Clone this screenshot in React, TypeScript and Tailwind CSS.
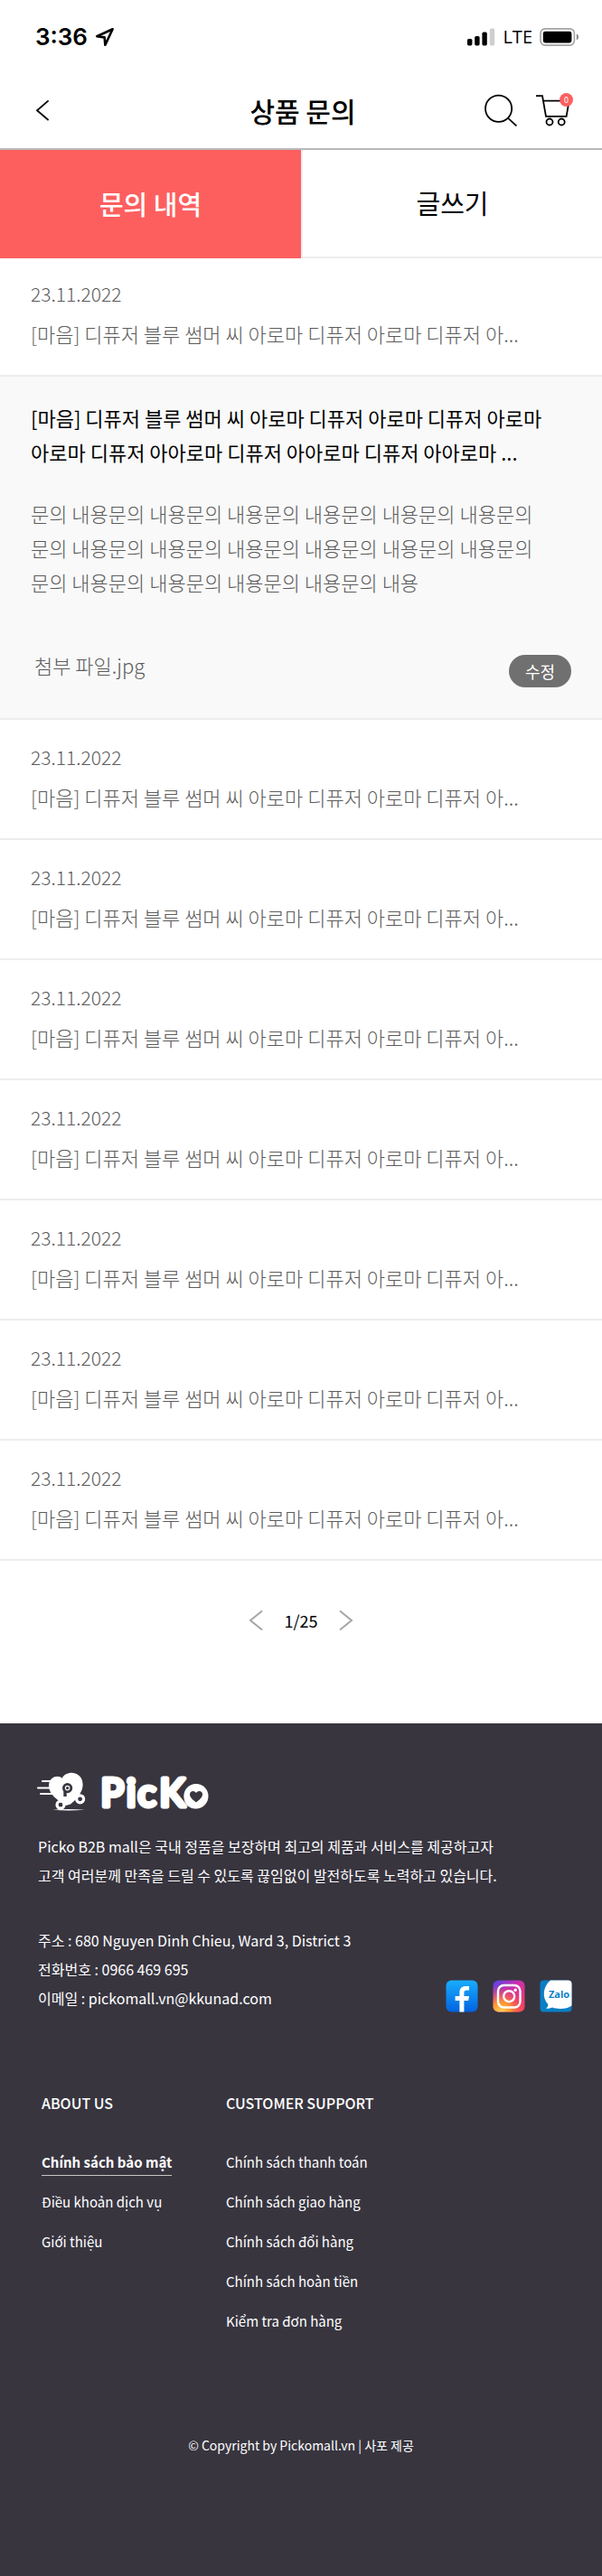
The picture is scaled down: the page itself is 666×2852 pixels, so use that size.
import React from "react";

const ROW_TITLE = "[마음] 디퓨저 블루 썸머 씨 아로마 디퓨저 아로마 디퓨저 아...";
const rows = [1, 2, 3, 4, 5, 6, 7];

const supportLinks = [
  "Chính sách thanh toán",
  "Chính sách giao hàng",
  "Chính sách đổi hàng",
  "Chính sách hoàn tiền",
  "Kiểm tra đơn hàng",
];

function StatusBar() {
  return (
    <div className="flex h-[82px] items-center justify-between pr-[25px] pl-[39px] font-['Inter',sans-serif]">
      <div className="flex items-center gap-2">
        <span className="text-[26px] leading-8 font-semibold">3:36</span>
        <svg width="22" height="22" viewBox="0 0 22 22" fill="none" stroke="#000" strokeWidth="2.6" strokeLinejoin="round" aria-hidden="true">
          <path d="M19.6 2.2 2.2 10.2 10.6 11.4 11.4 19.8Z" />
        </svg>
      </div>
      <div className="flex items-center gap-2">
        <svg width="31" height="20" viewBox="0 0 31 20" aria-hidden="true">
          <rect x="0" y="12" width="5.4" height="7.4" rx="1.6" />
          <rect x="8.2" y="9" width="5.4" height="10.4" rx="1.6" />
          <rect x="16.4" y="4.6" width="5.4" height="14.8" rx="1.6" />
          <rect x="24.8" y="0.6" width="5.4" height="18.8" rx="1.6" fill="#cfcfcf" />
        </svg>
        <span className="font-['Open_Sans',sans-serif] text-[20px] leading-6 font-medium">LTE</span>
        <svg width="44" height="20" viewBox="0 0 44 20" aria-hidden="true">
          <rect x="1" y="0.9" width="37.4" height="18.2" rx="5" fill="none" stroke="#a3a3a3" strokeWidth="1.6" />
          <rect x="3.8" y="3.8" width="31.6" height="12.6" rx="2.4" />
          <path d="M40.8 6.6c3 1 3 5.8 0 6.8Z" fill="#8a8a8a" />
        </svg>
      </div>
    </div>
  );
}

function Header() {
  return (
    <header className="grid h-[84px] grid-cols-[1fr_auto_1fr] items-center border-b-2 border-[#b9b9b9] pr-8 pb-0.5 pl-9">
      <button type="button" aria-label="뒤로" className="w-6">
        <svg width="22" height="26" viewBox="0 0 22 26" fill="none" stroke="#000" strokeWidth="1.8" aria-hidden="true">
          <path d="M17.6 2.4 5 13.2 17.6 24" />
        </svg>
      </button>
      <h1 className="text-[30px] leading-9 font-medium">상품 문의</h1>
      <div className="flex items-center justify-end gap-5">
        <button type="button" aria-label="검색">
          <svg width="36" height="36" viewBox="0 0 36 36" fill="none" stroke="#000" strokeWidth="1.8" aria-hidden="true">
            <circle cx="15.6" cy="16.2" r="14.6" />
            <path d="M25.6 26.4 35.4 35.4" />
          </svg>
        </button>
        <button type="button" aria-label="장바구니" className="relative">
          <svg width="42" height="36" viewBox="0 0 42 36" fill="none" stroke="#000" strokeWidth="1.8" aria-hidden="true">
            <path d="M1 2.2H8L12 24.8H34.6L37.6 7.6H8.8" />
            <circle cx="16" cy="31" r="3.5" />
            <circle cx="29.2" cy="31" r="3.5" />
          </svg>
          <span className="absolute -top-px right-0 flex size-[15px] items-center justify-center rounded-full bg-[#fd5f5f] text-[9px] leading-none text-white">0</span>
        </button>
      </div>
    </header>
  );
}

function InquiryRow({ first = false }: { first?: boolean }) {
  return (
    <li className={`${first ? "pt-5" : "pt-[22px]"} border-b-2 border-[#ededed] px-[34px] pb-[27px] leading-[38px] font-light text-[#5c5c5c]`}>
      <time className="block text-[21px]">23.11.2022</time>
      <p className="mt-1.5 truncate text-[22px]">{ROW_TITLE}</p>
    </li>
  );
}

function Logo() {
  return (
    <svg width="192" height="52" viewBox="0 -4 192 52" role="img" aria-label="PicKo">
      <g stroke="#fff" strokeWidth="2" strokeLinecap="round">
        <path d="M6 10H16M1 17.5H15M4 24H17" />
      </g>
      <path d="M32 37C22 31 13 24 13 15.5 13 8 18 4.8 22.5 4.8 25 4.8 26.5 5.6 27.6 6.8 29.4 2.8 34 .6 39 .8 46 1.2 50.6 6.5 50.6 14 50.6 22 44 30 37 35.5Z" fill="#fff" />
      <circle cx="26" cy="36.2" r="4" fill="#38353f" stroke="#fff" strokeWidth="3.2" />
      <circle cx="47.6" cy="29.8" r="4" fill="#38353f" stroke="#fff" strokeWidth="3.2" />
      <path d="M17 41.8Q34 40.4 53 41.8 34 43.2 17 41.8Z" fill="#fff" />
      <path d="M31 27V17" stroke="#38353f" strokeWidth="3.4" fill="none" />
      <circle cx="33.6" cy="17.6" r="4.2" fill="#fff" stroke="#38353f" strokeWidth="2.8" />
      <circle cx="33.6" cy="17.6" r="1.6" fill="#38353f" />
      <text x="70.5 99 111.5 135.5 163.5" y="37.5" fill="#fff" stroke="#fff" strokeWidth="5" strokeLinejoin="round" strokeLinecap="round" className="font-['Lato',sans-serif] text-[42px] font-medium">PicKo</text>
      <circle cx="176" cy="26.5" r="13.5" fill="#fff" />
      <path d="M176 33.5C172 30.5 169 28 169 24.6 169 20.4 174 19.6 176 23 178 19.6 183 20.4 183 24.6 183 28 180 30.5 176 33.5Z" fill="#38353f" />
    </svg>
  );
}

function Socials() {
  return (
    <div className="flex gap-4">
      <a href="#facebook" aria-label="Facebook">
        <svg width="36" height="36" viewBox="0 0 36 36" aria-hidden="true">
          <defs>
            <linearGradient id="fb" x1="0" y1="0" x2="0" y2="1">
              <stop offset="0" stopColor="#19adff" />
              <stop offset="1" stopColor="#0163e0" />
            </linearGradient>
          </defs>
          <rect x=".5" y=".5" width="35" height="35" rx="6" fill="url(#fb)" />
          <path d="M15.4 35.5V23H10.6V18H15.4V14.2C15.4 9.4 18 7 22.4 7H26V11.6H23.2C21 11.6 20.4 12.7 20.4 14.6V18H26L25.2 23H20.4V35.5Z" fill="#fff" />
        </svg>
      </a>
      <a href="#instagram" aria-label="Instagram">
        <svg width="36" height="36" viewBox="0 0 36 36" fill="none" aria-hidden="true">
          <defs>
            <linearGradient id="igTop" x1="0" y1="0" x2="1" y2="1">
              <stop offset="0" stopColor="#5046e8" />
              <stop offset=".4" stopColor="#c530b4" />
              <stop offset="1" stopColor="#ff3d55" />
            </linearGradient>
            <radialGradient id="igGlow" cx=".25" cy="1" r=".85">
              <stop offset="0" stopColor="#ffd35a" />
              <stop offset=".35" stopColor="#ff9a2e" />
              <stop offset="1" stopColor="#ff3d55" stopOpacity="0" />
            </radialGradient>
          </defs>
          <rect x=".5" y=".5" width="35" height="35" rx="6" fill="url(#igTop)" />
          <rect x=".5" y=".5" width="35" height="35" rx="6" fill="url(#igGlow)" />
          <g stroke="#fff" strokeWidth="2.4">
            <rect x="6" y="6" width="24.5" height="24.5" rx="6.5" />
            <circle cx="18.2" cy="18.2" r="6" />
          </g>
          <circle cx="25.2" cy="11.2" r="1.7" fill="#fff" />
        </svg>
      </a>
      <a href="#zalo" aria-label="Zalo">
        <svg width="36" height="36" viewBox="0 0 36 36" aria-hidden="true">
          <rect x=".5" y=".5" width="35" height="35" rx="4" fill="#0a7fc4" />
          <path d="M12 .5H31.5Q35.5 .5 35.5 4.5V28.5C31 32.5 20 33 14 30.6 12 31.8 9.5 32 7 31.4 9 30.2 9.6 28.6 9.2 27 2.5 20 3.5 7 12 .5Z" fill="#fff" />
          <text x="21.5" y="19.5" textAnchor="middle" fill="#0a7fc4" className="font-['Open_Sans',sans-serif] text-[11px] font-bold">Zalo</text>
        </svg>
      </a>
    </div>
  );
}

function Footer() {
  return (
    <footer className="bg-[#38353f] pt-[50px] pb-[129px] text-white">
      <div className="px-[41px]">
        <Logo />
      </div>
      <p className="mt-[18px] px-[42px] text-[16px] leading-8 break-keep">
        Picko B2B mall은 국내 정품을 보장하며 최고의 제품과 서비스를 제공하고자
        <br />
        고객 여러분께 만족을 드릴 수 있도록 끊임없이 발전하도록 노력하고 있습니다.
      </p>
      <div className="mt-10 flex items-end justify-between pr-[33px] pl-[42px]">
        <address className="text-[16px] leading-8 not-italic">
          주소 : 680 Nguyen Dinh Chieu, Ward 3, District 3
          <br />
          전화번호 : 0966 469 695
          <br />
          이메일 : pickomall.vn@kkunad.com
        </address>
        <Socials />
      </div>
      <div className="mt-[84px] grid grid-cols-[204px_1fr] px-[46px] text-[15px]">
        <nav aria-labelledby="about-heading">
          <h2 id="about-heading" className="text-[16px] leading-8 font-medium">ABOUT US</h2>
          <ul className="mt-9 flex flex-col gap-4 leading-7">
            <li className="flex"><a href="#privacy" className="-mb-px border-b border-[#c8c5c0] font-bold">Chính sách bảo mật</a></li>
            <li><a href="#terms">Điều khoản dịch vụ</a></li>
            <li><a href="#intro">Giới thiệu</a></li>
          </ul>
        </nav>
        <nav aria-labelledby="support-heading">
          <h2 id="support-heading" className="text-[16px] leading-8 font-medium">CUSTOMER SUPPORT</h2>
          <ul className="mt-9 flex flex-col gap-4 leading-7">
            {supportLinks.map((label) => (
              <li key={label}><a href="#support">{label}</a></li>
            ))}
          </ul>
        </nav>
      </div>
      <p className="mt-[107px] text-center text-[14px] leading-8">© Copyright by Pickomall.vn | 사포 제공</p>
    </footer>
  );
}

export default function App() {
  return (
    <div className="bg-white font-['Noto_Sans_CJK_KR',sans-serif] text-black">
      <StatusBar />
      <Header />
      <main>
        <div role="tablist" className="grid h-[120px] grid-cols-2 text-[29px]">
          <button type="button" role="tab" aria-selected="true" className="bg-[#fd5f5f] font-medium text-white">문의 내역</button>
          <button type="button" role="tab" aria-selected="false" className="border-b-2 border-l-2 border-[#ededed]">글쓰기</button>
        </div>
        <ul>
          <InquiryRow first />
          <li className="border-b-2 border-[#ededed] bg-[#f9f9f9] px-[34px] pt-[26px] pb-[34px] text-[22px] leading-[38px] break-keep">
            <h2>
              [마음] 디퓨저 블루 썸머 씨 아로마 디퓨저 아로마 디퓨저 아로마 아로마 디퓨저 아아로마 디퓨저 아아로마 디퓨저 아아로마 ...
            </h2>
            <p className="mt-[30px] pr-4 font-light text-[#5c5c5c]">
              문의 내용문의 내용문의 내용문의 내용문의 내용문의 내용문의
              <br />
              문의 내용문의 내용문의 내용문의 내용문의 내용문의 내용문의
              <br />
              문의 내용문의 내용문의 내용문의 내용문의 내용
            </p>
            <div className="mt-[54px] flex items-start justify-between pl-1">
              <a href="#file" className="font-light text-[#5c5c5c]">첨부 파일.jpg</a>
              <button type="button" className="mt-2 h-9 w-[69px] rounded-full bg-[#707070] text-[18px] leading-9 text-white">수정</button>
            </div>
          </li>
          {rows.map((row) => (
            <InquiryRow key={row} />
          ))}
        </ul>
        <nav aria-label="페이지" className="flex items-center justify-center gap-[23px] pt-[50px] pb-[98px]">
          <button type="button" aria-label="이전">
            <svg width="16" height="24" viewBox="0 0 16 24" fill="none" stroke="#a6a6a6" strokeWidth="2" aria-hidden="true">
              <path d="M15 1.5 2 12 15 22.5" />
            </svg>
          </button>
          <span className="text-[18px] leading-8">1/25</span>
          <button type="button" aria-label="다음">
            <svg width="16" height="24" viewBox="0 0 16 24" fill="none" stroke="#a6a6a6" strokeWidth="2" aria-hidden="true">
              <path d="M1 1.5 14 12 1 22.5" />
            </svg>
          </button>
        </nav>
      </main>
      <Footer />
    </div>
  );
}
